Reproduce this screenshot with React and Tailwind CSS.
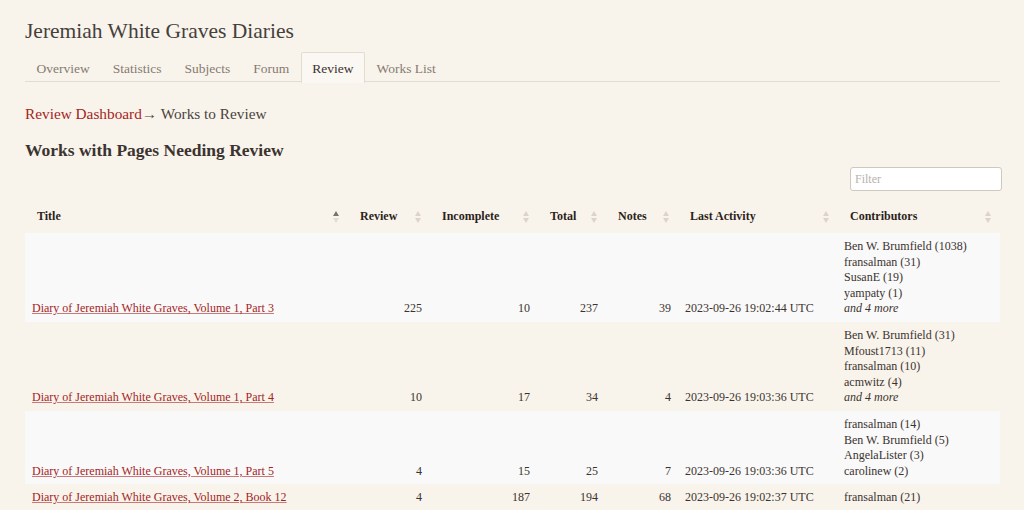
import React from "react";

const F = { fontFamily: '"Liberation Serif", "DejaVu Serif", serif' };

function SortIcon({ active }) {
  return (
    <svg width="6" height="12" viewBox="0 0 6 12" className="inline-block">
      <path d="M3 0 L6 5 L0 5 Z" fill={active ? "#7d726c" : "#ddd3cb"} />
      <path d="M3 12 L6 7 L0 7 Z" fill={active ? "#e3dbd4" : "#ddd3cb"} />
    </svg>
  );
}

const rows = [
  {
    title: "Diary of Jeremiah White Graves, Volume 1, Part 3",
    review: 225, incomplete: 10, total: 237, notes: 39,
    last: "2023-09-26 19:02:44 UTC",
    contributors: ["Ben W. Brumfield (1038)", "fransalman (31)", "SusanE (19)", "yampaty (1)"],
    more: true, odd: true,
  },
  {
    title: "Diary of Jeremiah White Graves, Volume 1, Part 4",
    review: 10, incomplete: 17, total: 34, notes: 4,
    last: "2023-09-26 19:03:36 UTC",
    contributors: ["Ben W. Brumfield (31)", "Mfoust1713 (11)", "fransalman (10)", "acmwitz (4)"],
    more: true, odd: false,
  },
  {
    title: "Diary of Jeremiah White Graves, Volume 1, Part 5",
    review: 4, incomplete: 15, total: 25, notes: 7,
    last: "2023-09-26 19:03:36 UTC",
    contributors: ["fransalman (14)", "Ben W. Brumfield (5)", "AngelaLister (3)", "carolinew (2)"],
    more: false, odd: true,
  },
  {
    title: "Diary of Jeremiah White Graves, Volume 2, Book 12",
    review: 4, incomplete: 187, total: 194, notes: 68,
    last: "2023-09-26 19:02:37 UTC",
    contributors: ["fransalman (21)"],
    more: false, odd: false,
  },
];

const tabs = ["Overview", "Statistics", "Subjects", "Forum", "Review", "Works List"];

export default function App() {
  return (
    <div className="w-[1024px] h-[510px] overflow-hidden bg-[#f9f4eb] text-[#3b3330]" style={F}>
      <div className="pl-[25px] pr-[24px] pt-[17px]">
        <h1 className="text-[21.5px] leading-[28px] font-normal text-[#45403c]">Jeremiah White Graves Diaries</h1>
        <div className="mt-[7px] flex h-[30px] border-b border-[#e2dcd3] text-[13.5px]">
          {tabs.map((t) => (
            <div
              key={t}
              className={
                t === "Review"
                  ? "px-[10.5px] pt-[2px] flex items-center border border-b-0 border-[#e2dcd3] rounded-t-[2px] bg-[#fbf8f3] text-[#3b3330] -mb-px h-[31px]"
                  : "px-[10.5px] pt-[2px] flex items-center border border-b-0 border-transparent text-[#857a73] -mb-px h-[31px]"
              }
            >
              {t}
            </div>
          ))}
        </div>
        <div className="mt-[23px] text-[15.3px] leading-[18px]">
          <span className="text-[#a4241f]">Review Dashboard</span>
          <span className="text-[#4a433f]">→ Works to Review</span>
        </div>
        <h2 className="mt-[16px] text-[17.5px] leading-[22px] font-semibold text-[#3b3330]">Works with Pages Needing Review</h2>
        <div className="mt-[6px] flex justify-end">
          <input
            className="w-[152px] h-[24px] bg-white border border-[#cfc8c0] rounded-[3px] px-[4px] text-[12px] placeholder:text-[#b9b2ab] outline-none -mr-[2px]"
            placeholder="Filter"
            style={F}
          />
        </div>
        <table className="mt-[9px] w-[975px] table-fixed border-collapse text-[12px] leading-[15.6px]">
          <colgroup>
            <col className="w-[323px]" />
            <col className="w-[82px]" />
            <col className="w-[108px]" />
            <col className="w-[68px]" />
            <col className="w-[72px]" />
            <col className="w-[160px]" />
            <col className="w-[162px]" />
          </colgroup>
          <thead>
            <tr className="h-[33px] text-[12px] font-bold text-[#2d1f1b]">
              {[
                ["Title", true],
                ["Review", false],
                ["Incomplete", false],
                ["Total", false],
                ["Notes", false],
                ["Last Activity", false],
                ["Contributors", false],
              ].map(([h, a]) => (
                <th key={h} className="pl-[12px] pr-[9px] text-left align-middle">
                  <div className="flex items-center justify-between">
                    <span>{h}</span>
                    <SortIcon active={a} />
                  </div>
                </th>
              ))}
            </tr>
          </thead>
          <tbody>
            {rows.map((r) => (
              <tr key={r.title} className={r.odd ? "bg-[#f9f9f9]" : ""}>
                <td className="pl-[7px] pt-[5px] pb-[5px] align-bottom">
                  <span className="text-[#a4241f] underline decoration-[#c97a76]">{r.title}</span>
                </td>
                <td className="pr-[8px] pt-[5px] pb-[5px] align-bottom text-right">{r.review}</td>
                <td className="pr-[8px] pt-[5px] pb-[5px] align-bottom text-right">{r.incomplete}</td>
                <td className="pr-[8px] pt-[5px] pb-[5px] align-bottom text-right">{r.total}</td>
                <td className="pr-[7px] pt-[5px] pb-[5px] align-bottom text-right">{r.notes}</td>
                <td className="pl-[7px] pt-[5px] pb-[5px] align-bottom whitespace-nowrap">{r.last}</td>
                <td className="pl-[6px] pt-[6px] pb-[5px] align-bottom">
                  {r.contributors.map((c) => (
                    <div key={c}>{c}</div>
                  ))}
                  {r.more && <div className="italic">and 4 more</div>}
                </td>
              </tr>
            ))}
          </tbody>
        </table>
      </div>
    </div>
  );
}
